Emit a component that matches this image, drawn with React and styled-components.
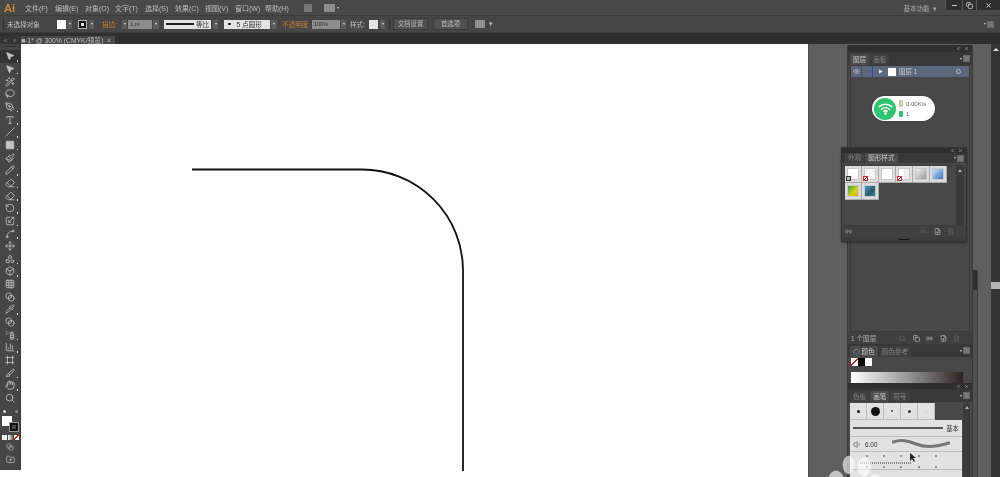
import styled, { createGlobalStyle } from 'styled-components';
import {
	MousePointer2, Wand2, Lasso, PenTool, Type, Slash, Square, Paintbrush, Pencil, Eraser,
	RotateCcw, Scaling, Spline, Move, Shapes, Box, Grid3x3, Pipette, Blend, SprayCan,
	BarChart3, Frame, Slice, Hand, Search, ChevronsLeft, X, Minus, Copy, Trash2, FilePlus,
	Eye, Play, Volume1, FolderPlus, Link2,
} from 'lucide-react';

const GlobalStyle = createGlobalStyle`
	html, body {
		margin: 0;
		padding: 0;
		background: #fff;
		overflow: hidden;
	}
	* {
		box-sizing: border-box;
	}
`;

const FONT = `"Liberation Sans", "Noto Sans CJK SC", sans-serif`;

const Window = styled.div`
	position: relative;
	display: flex;
	flex-direction: column;
	width: 1000px;
	height: 477px;
	overflow: hidden;
	font-family: ${FONT};
	color: #c4c4c4;
	filter: blur(0.35px);
`;

const MenuBar = styled.div`
	display: flex;
	align-items: center;
	height: 15px;
	background: #494949;
`;

const Logo = styled.div`
	width: 25px;
	padding-left: 4px;
	font-size: 11px;
	font-weight: 700;
	color: #d08a2e;
`;

const MenuItem = styled.div`
	width: 30px;
	font-size: 7px;
	white-space: nowrap;
	color: #bdbdbd;
`;

const MenuIcon = styled.div`
	flex: none;
	width: ${(p) => p.$w}px;
	height: 8px;
	margin-left: ${(p) => p.$ml}px;
	background: ${(p) => p.$bg || '#777'};
`;

const MenuArrow = styled.div`
	margin-left: 2px;
	border-left: 1.5px solid transparent;
	border-right: 1.5px solid transparent;
	border-top: 2px solid #ddd;
`;

const Workspace = styled.div`
	margin-left: auto;
	margin-right: 8px;
	font-size: 6.5px;
	color: #aaa;
`;

const WindowButtons = styled.div`
	display: flex;
	align-self: flex-start;
	height: 10px;
	background: #2f2f2f;
	border-radius: 0 0 2px 2px;
`;

const WindowButton = styled.div`
	display: flex;
	align-items: center;
	justify-content: center;
	width: ${(p) => p.$w}px;
	border-left: 1px solid #555;
	color: #ddd;
`;

const ControlBar = styled.div`
	display: flex;
	align-items: center;
	height: 18px;
	background: #464646;
	border-top: 1px solid #3b3b3b;
	border-bottom: 1px solid #3d3d3d;
`;

const Divider = styled.div`
	width: 1px;
	height: 11px;
	margin-left: ${(p) => p.$ml}px;
	background: #2f2f2f;
`;

const Label = styled.div`
	flex: none;
	width: ${(p) => p.$w}px;
	margin-left: ${(p) => p.$ml}px;
	font-size: 6.6px;
	white-space: nowrap;
	color: ${(p) => (p.$orange ? '#c97f2c' : '#c0c0c0')};
`;

const Swatch = styled.div`
	flex: none;
	width: ${(p) => p.$w || 9}px;
	height: 9px;
	margin-left: ${(p) => p.$ml}px;
	background: ${(p) => p.$bg || '#fff'};
`;

const StrokeSwatch = styled(Swatch)`
	display: flex;
	align-items: center;
	justify-content: center;
	background: #111;
	border: 1px solid #bbb;

	&::after {
		content: '';
		width: 3px;
		height: 3px;
		background: #ddd;
	}
`;

const ArrowBox = styled.div`
	flex: none;
	display: flex;
	align-items: center;
	justify-content: center;
	width: ${(p) => p.$w || 6}px;
	height: 9px;
	margin-left: ${(p) => p.$ml}px;
	background: #5c5c5c;

	&::after {
		content: '';
		border-left: 1.5px solid transparent;
		border-right: 1.5px solid transparent;
		border-top: 2px solid #ddd;
	}
`;

const Input = styled.div`
	flex: none;
	width: ${(p) => p.$w}px;
	height: 9px;
	margin-left: ${(p) => p.$ml}px;
	padding-left: 2px;
	background: #8d8d8d;
	color: #2c2c2c;
	font-size: 5.5px;
	line-height: 9px;
	white-space: nowrap;
`;

const LightBox = styled(Input)`
	display: flex;
	align-items: center;
	gap: 2px;
	background: #e3e3e3;
	color: #333;
	font-size: 6.6px;
`;

const StrokeLine = styled.div`
	width: 28px;
	height: 1.5px;
	background: #222;
`;

const BrushDot = styled.div`
	width: 2.5px;
	height: 2.5px;
	margin: 0 4px 0 2px;
	border-radius: 50%;
	background: #111;
`;

const BarButton = styled.div`
	flex: none;
	width: 35px;
	height: 12px;
	margin-left: ${(p) => p.$ml}px;
	border: 1px solid #3a3a3a;
	background: #515151;
	color: #b9b9b9;
	font-size: 6.4px;
	line-height: 10px;
	text-align: center;
`;

const PanelMenuIcon = styled.div`
	display: flex;
	align-items: center;
	gap: 1px;
	margin-left: ${(p) => p.$ml}px;

	&::before {
		content: '';
		border-top: 1.5px solid transparent;
		border-bottom: 1.5px solid transparent;
		border-left: 2px solid #ccc;
		transform: rotate(90deg);
	}
	&::after {
		content: '';
		width: 5px;
		height: 5px;
		background: #777;
		border: 1px solid #666;
	}
`;

const TabStrip = styled.div`
	display: flex;
	align-items: flex-end;
	height: 11px;
	padding-left: 21px;
	background: #2f2f2f;
`;

const DocTab = styled.div`
	display: flex;
	align-items: center;
	justify-content: space-between;
	width: 94px;
	height: 8px;
	padding-right: 4px;
	background: #484848;
	color: #bdbdbd;
	font-size: 6.8px;
	white-space: nowrap;
`;

const Body = styled.div`
	flex: 1;
	display: flex;
	min-height: 0;
	background: #fff;
`;

const Canvas = styled.div`
	flex: none;
	width: 808px;
	height: 100%;
	background: #fff;
`;

const RightPane = styled.div`
	flex: none;
	display: flex;
	width: 183px;
	padding: 1px 0 0 40px;
	background: #5f5f5f;
	border-left: 1px solid #4e4e4e;
`;

const DockColumn = styled.div`
	display: flex;
	flex-direction: column;
	flex: none;
	width: 126px;
	margin-left: -2px;
`;

const SideDock = styled.div`
	width: 5px;
	height: 207px;
	margin-top: 225px;
	background: linear-gradient(#2f2f2f 0 20px, #505050 20px);
	border-right: 1px solid #3c3c3c;
`;

const Rail = styled.div`
	flex: none;
	display: flex;
	flex-direction: column;
	align-items: center;
	width: 9px;
	background: #353535;
`;

const RailArrow = styled.div`
	margin-top: 4px;
	border-left: 3px solid transparent;
	border-right: 3px solid transparent;
	border-bottom: 3px solid #ddd;
`;

const RailThumb = styled.div`
	width: 9px;
	height: 7px;
	margin-top: 231px;
	background: #b5b5b5;
`;

const Panel = styled.div`
	display: flex;
	flex-direction: column;
	flex: ${(p) => (p.$h ? 'none' : '1')};
	height: ${(p) => (p.$h ? `${p.$h}px` : 'auto')};
	min-height: 0;
	background: #484848;
	border-left: 1px solid #3a3a3a;
	border-right: 1px solid #3a3a3a;
`;

const PanelHead = styled.div`
	flex: none;
	display: flex;
	align-items: center;
	justify-content: flex-end;
	gap: 3px;
	height: ${(p) => p.$h || 7}px;
	padding-right: 3px;
	background: #2f2f2f;
	color: #ccc;
`;

const TabRow = styled.div`
	flex: none;
	display: flex;
	align-items: flex-end;
	height: ${(p) => p.$h || 13}px;
	padding-left: ${(p) => p.$pl || 2}px;
	background: #383838;
`;

const PanelTab = styled.div`
	height: ${(p) => p.$h || 11}px;
	padding: 0 3px;
	margin-right: 1px;
	background: ${(p) => (p.$active ? '#4a4a4a' : '#3f3f3f')};
	color: ${(p) => (p.$active ? '#c8c8c8' : '#808080')};
	font-size: 6.6px;
	line-height: ${(p) => p.$h || 11}px;
	white-space: nowrap;
`;

const TabMenu = styled(PanelMenuIcon)`
	margin-left: auto;
	align-self: center;
	padding-right: 2px;
`;

const LayerBox = styled.div`
	flex: 1;
	margin: 0 2px;
	border: 1px solid #3a3a3a;
`;

const LayerRow = styled.div`
	display: flex;
	align-items: center;
	height: 11px;
	background: #5b677c;
	color: #ccc;
	font-size: 6.4px;
	white-space: nowrap;
`;

const LayerCell = styled.div`
	flex: none;
	display: flex;
	align-items: center;
	justify-content: center;
	width: ${(p) => p.$w}px;
	height: 100%;
	border-right: 1px solid #48505f;
`;

const ColorBar = styled.div`
	width: 1px;
	height: 100%;
	margin-right: 1px;
	background: #3c6ae0;
`;

const LayerThumb = styled.div`
	width: 8px;
	height: 8px;
	margin: 0 3px 0 2px;
	background: #fff;
`;

const LayerName = styled.div`
	flex: 1;
`;

const TargetRing = styled.div`
	width: 5px;
	height: 5px;
	margin-right: 8px;
	border: 1px solid #bbb;
	border-radius: 50%;
`;

const PanelFoot = styled.div`
	flex: none;
	display: flex;
	align-items: center;
	gap: 6.5px;
	height: ${(p) => p.$h || 12}px;
	padding: 0 12px 0 3px;
	background: #404040;
	color: #b0b0b0;
	font-size: 6.6px;
	white-space: nowrap;
`;

const FootText = styled.div`
	margin-right: auto;
`;

const FootIcon = styled.div`
	display: flex;
	color: ${(p) => (p.$dim ? '#666' : '#c8c8c8')};
`;

const ColorChips = styled.div`
	display: flex;
	margin: 1px 0 0 3px;
`;

const Chip = styled.div`
	width: 7px;
	height: 8px;
	background: ${(p) => p.$bg};
`;

const Gradient = styled.div`
	height: 11px;
	margin: 6px 9px 0 3px;
	background: linear-gradient(90deg, #fff, #8e8e8e 55%, #2d2221);
`;

const BrushBody = styled.div`
	flex: 1;
	display: flex;
	min-height: 0;
	padding: 1px 2px 0 2px;
`;

const BrushList = styled.div`
	flex: none;
	width: 112px;
	background: #e2e2e2;
`;

const BrushTipRow = styled.div`
	display: flex;
	background: #484848;
`;

const BrushTip = styled.div`
	display: flex;
	align-items: center;
	justify-content: center;
	width: 17px;
	height: 17px;
	border-right: 1px solid #bcbcbc;
	border-bottom: 1px solid #bcbcbc;
	background: #e2e2e2;
`;

const Tip = styled.div`
	width: ${(p) => p.$s}px;
	height: ${(p) => p.$s}px;
	border-radius: 50%;
	background: ${(p) => p.$c || '#111'};
`;

const BrushRow = styled.div`
	display: flex;
	align-items: center;
	height: ${(p) => p.$h}px;
	padding: 0 3px;
	gap: 3px;
	border-bottom: 1px solid #bcbcbc;
	color: #333;
	font-size: 6.4px;
	white-space: nowrap;
`;

const BasicLine = styled.div`
	flex: 1;
	height: 2px;
	background: #555;
`;

const WaveStroke = styled.svg`
	margin-left: 12px;
`;

const ScrollTrack = styled.div`
	flex: none;
	display: flex;
	justify-content: center;
	width: 7px;
	margin-left: 1px;
	padding-top: 3px;
	background: #3a3a3a;
`;

const ScrollUp = styled.div`
	width: 0;
	height: 0;
	border-left: 2px solid transparent;
	border-right: 2px solid transparent;
	border-bottom: 3px solid #aaa;
`;

const Toolbar = styled.div`
	position: absolute;
	top: 36px;
	left: 0;
	display: flex;
	flex-direction: column;
	width: 21px;
	height: 434px;
	background: #464646;
	border-right: 1px solid #393939;
`;

const ToolbarHead = styled.div`
	flex: none;
	display: flex;
	align-items: center;
	justify-content: space-between;
	height: 8px;
	padding: 0 3px;
	background: #333;
	color: #bbb;
`;

const ToolbarGrip = styled.div`
	flex: none;
	height: 6px;
	padding-top: 2px;

	&::after {
		content: '';
		display: block;
		height: 1px;
		margin: 0 4px;
		background: #2c2c2c;
	}
`;

const Tool = styled.div`
	position: relative;
	flex: none;
	display: flex;
	align-items: center;
	justify-content: center;
	height: 12.66px;
	color: #c2c2c2;
	background: ${(p) => (p.$active ? '#333' : 'transparent')};

	${(p) =>
		p.$more &&
		`&::after {
			content: '';
			position: absolute;
			right: 2px;
			bottom: 1px;
			width: 1.5px;
			height: 1.5px;
			background: #ddd;
		}`}
`;

const ColorTools = styled.div`
	flex: 1;
	display: flex;
	flex-direction: column;
	align-items: center;
	padding-top: 3px;
`;

const MiniRow = styled.div`
	display: flex;
	align-items: center;
	justify-content: space-between;
	width: 15px;
	height: ${(p) => p.$h}px;
	color: #bbb;
`;

const FillStack = styled.div`
	position: relative;
	width: 17px;
	height: 16px;
	margin-top: 1px;
`;

const FillSquare = styled.div`
	position: absolute;
	top: 0;
	left: 0;
	width: 10px;
	height: 10px;
	background: #fff;
`;

const StrokeSquare = styled.div`
	position: absolute;
	right: 0;
	bottom: 0;
	width: 10px;
	height: 10px;
	border: 3px solid #111;
	outline: 1px solid #999;
	outline-offset: -1px;
`;

const FillModes = styled.div`
	display: flex;
	gap: 1px;
	margin-top: 3px;
`;

const FillMode = styled.div`
	width: ${(p) => p.$w}px;
	height: 5px;
	background: ${(p) => p.$bg};
`;

const ToolGlyph = styled.div`
	display: flex;
	margin-top: ${(p) => p.$mt}px;
	color: #b5b5b5;
`;

const SpeedPill = styled.div`
	position: absolute;
	top: 96px;
	left: 872px;
	display: flex;
	align-items: center;
	width: 63px;
	height: 25px;
	padding-left: 2px;
	border-radius: 13px;
	background: #fff;
	box-shadow: 0 0 2px rgba(0, 0, 0, 0.3);
`;

const WifiBadge = styled.div`
	flex: none;
	display: flex;
	align-items: center;
	justify-content: center;
	width: 22px;
	height: 22px;
	border-radius: 50%;
	background: #2fc46f;
`;

const SpeedInfo = styled.div`
	display: flex;
	flex-direction: column;
	gap: 3px;
	margin-left: 3px;
	color: #666;
	font-size: 6px;
`;

const SpeedLine = styled.div`
	display: flex;
	align-items: center;
	gap: 3px;
	height: 7px;
`;

const FloatPanel = styled.div`
	position: absolute;
	top: 147px;
	left: 841px;
	display: flex;
	flex-direction: column;
	width: 126px;
	height: 95px;
	background: #484848;
	border: 1px solid #333;
	box-shadow: 0 1px 2px rgba(0, 0, 0, 0.4);
`;

const StyleArea = styled.div`
	flex: 1;
	display: flex;
	margin: 2px 2px 0;
	border: 1px solid #3c3c3c;
	min-height: 0;
`;

const StyleGrid = styled.div`
	flex: 1;
	display: grid;
	grid-template-columns: repeat(6, 17px);
	grid-auto-rows: 17px;
	align-content: start;
`;

const StyleCell = styled.div`
	position: relative;
	display: flex;
	align-items: center;
	justify-content: center;
	background: #dcdcdc;
	border-right: 1px solid #aaa;
	border-bottom: 1px solid #aaa;
`;

const StyleFace = styled.div`
	width: 12px;
	height: 12px;
	background: ${(p) => p.$bg};
	border: 1px solid #c8c8c8;
`;

const StyleBadge = styled.div`
	position: absolute;
	left: 1px;
	bottom: 1px;
	width: 5px;
	height: 5px;
	border: 1px solid ${(p) => (p.$kind === 'red' ? '#d8262c' : '#333')};
	background: ${(p) =>
		p.$kind === 'red'
			? 'linear-gradient(135deg, #fff 35%, #d8262c 35% 65%, #fff 65%)'
			: '#bbb'};
`;

const StyleScroll = styled(ScrollTrack)`
	margin: 0;
`;

const Gripper = styled.div`
	flex: none;
	display: flex;
	align-items: center;
	justify-content: center;
	height: 4px;
	background: #3c3c3c;

	&::after {
		content: '';
		width: 10px;
		height: 1px;
		background: #111;
	}
`;

const Overlay = styled.svg`
	position: absolute;
	top: 0;
	left: 0;
	pointer-events: none;
`;

const menus = ['文件(F)', '编辑(E)', '对象(O)', '文字(T)', '选择(S)', '效果(C)', '视图(V)', '窗口(W)', '帮助(H)'];

const tools = [
	[MousePointer2, true, true],
	[MousePointer2, true],
	[Wand2],
	[Lasso],
	[PenTool, true],
	[Type, true],
	[Slash, true],
	[Square, true],
	[Paintbrush],
	[Pencil, true],
	[Eraser, true],
	[Eraser, true],
	[RotateCcw, true],
	[Scaling, true],
	[Spline, true],
	[Move],
	[Shapes, true],
	[Box, true],
	[Grid3x3],
	[Blend],
	[Pipette, true],
	[Blend],
	[SprayCan, true],
	[BarChart3, true],
	[Frame],
	[Slice, true],
	[Hand, true],
	[Search],
];

const styleFaces = [
	{ bg: '#fff', badge: 'dark' },
	{ bg: '#f4f4f4', badge: 'red' },
	{ bg: '#fff' },
	{ bg: 'linear-gradient(90deg, #fff 50%, #eee 50%)', badge: 'red' },
	{ bg: 'linear-gradient(135deg, #eee, #999)' },
	{ bg: 'linear-gradient(135deg, #cfe3f8, #2f78c8)' },
	{ bg: 'linear-gradient(135deg, #2f9e3a, #d5d51c 60%, #f0a010)' },
	{ bg: 'linear-gradient(135deg, #3ba0cc, #2a5a6a 60%, #3a8aa8)' },
];

const PanelWindowMarks = () => (
	<>
		<ChevronsLeft size={5} strokeWidth={2} />
		<X size={5} strokeWidth={2} />
	</>
);

const WifiIcon = () => (
	<svg width="15" height="13" viewBox="0 0 24 20" fill="none" stroke="#fff" strokeWidth="2.6" strokeLinecap="round">
		<path d="M2 7a15 15 0 0 1 20 0" />
		<path d="M6 11a9 9 0 0 1 12 0" />
		<path d="M9.5 14.5a4 4 0 0 1 5 0" />
		<circle cx="12" cy="18" r="0.8" fill="#fff" />
	</svg>
);

const App = () => {
	return (
		<>
			<GlobalStyle />
			<Window>
				<MenuBar>
					<Logo>Ai</Logo>
					{menus.map((m) => (
						<MenuItem key={m}>{m}</MenuItem>
					))}
					<MenuIcon $w={8} $ml={9} />
					<MenuIcon $w={11} $ml={12} $bg="#8a8a8a" />
					<MenuArrow />
					<Workspace>基本功能 &nbsp;▾</Workspace>
					<WindowButtons>
						<WindowButton $w={17}><Minus size={7} strokeWidth={3} /></WindowButton>
						<WindowButton $w={14}><Copy size={7} strokeWidth={2.5} /></WindowButton>
						<WindowButton $w={24}><X size={7} strokeWidth={3} /></WindowButton>
					</WindowButtons>
				</MenuBar>

				<ControlBar>
					<Divider $ml={3} />
					<Label $ml={3} $w={31}>未选择对象</Label>
					<Swatch $ml={19} />
					<ArrowBox $ml={1} $w={5} />
					<StrokeSwatch $ml={6} />
					<ArrowBox $ml={2} $w={5} />
					<Label $ml={8} $w={20} $orange>描边:</Label>
					<ArrowBox $w={5} />
					<Input $ml={1} $w={24}>1 pt</Input>
					<ArrowBox $ml={1} />
					<LightBox $ml={5} $w={47}><StrokeLine />等比</LightBox>
					<ArrowBox $ml={2} $w={5} />
					<LightBox $ml={6} $w={46}><BrushDot />5 点圆形</LightBox>
					<ArrowBox $ml={1} />
					<Label $ml={5} $w={30} $orange>不透明度:</Label>
					<Input $w={28}>100%</Input>
					<ArrowBox $ml={1} $w={5} />
					<Label $ml={4} $w={19}>样式:</Label>
					<Swatch $bg="#e4e4e4" />
					<ArrowBox $ml={2} $w={5} />
					<Divider $ml={4} />
					<BarButton $ml={3}>文档设置</BarButton>
					<BarButton $ml={5}>首选项</BarButton>
					<MenuIcon $w={10} $ml={7} $bg="#8f8f8f" />
					<Label $ml={4} $w={5}>▾</Label>
					<PanelMenuIcon $ml={490} />
				</ControlBar>

				<TabStrip>
					<DocTab>
						<span>■-1* @ 300% (CMYK/预览)</span>
						<span>×</span>
					</DocTab>
				</TabStrip>

				<Body>
					<Canvas>
						<svg width="808" height="433" viewBox="0 44 808 433">
							<path d="M192 169.5H362A101 101 0 0 1 463 270.5V471" fill="none" stroke="#111" strokeWidth="1.8" />
						</svg>
					</Canvas>

					<RightPane>
						<DockColumn>
							<Panel $h={299}>
								<PanelHead><PanelWindowMarks /></PanelHead>
								<TabRow>
									<PanelTab $active>图层</PanelTab>
									<PanelTab>画板</PanelTab>
									<TabMenu />
								</TabRow>
								<LayerBox>
									<LayerRow>
										<LayerCell $w={11}><Eye size={7} /></LayerCell>
										<LayerCell $w={11} />
										<ColorBar />
										<Play size={5} fill="#ddd" style={{ margin: '0 3px' }} />
										<LayerThumb />
										<LayerName>图层 1</LayerName>
										<TargetRing />
									</LayerRow>
								</LayerBox>
								<PanelFoot>
									<FootText>1 个图层</FootText>
									<FootIcon $dim><Search size={7} /></FootIcon>
									<FootIcon><Copy size={7} /></FootIcon>
									<FootIcon><Link2 size={7} /></FootIcon>
									<FootIcon><FilePlus size={7} /></FootIcon>
									<FootIcon $dim><Trash2 size={7} /></FootIcon>
								</PanelFoot>
							</Panel>

							<Panel $h={39}>
								<TabRow>
									<PanelTab $active>◇ 颜色</PanelTab>
									<PanelTab>颜色参考</PanelTab>
									<TabMenu />
								</TabRow>
								<ColorChips>
									<Chip $bg="linear-gradient(135deg, #fff 42%, #e01c1c 42% 58%, #fff 58%)" />
									<Chip $bg="#000" />
									<Chip $bg="#fff" />
								</ColorChips>
								<Gradient />
							</Panel>

							<Panel>
								<PanelHead $h={6}><PanelWindowMarks /></PanelHead>
								<TabRow>
									<PanelTab>色板</PanelTab>
									<PanelTab $active>画笔</PanelTab>
									<PanelTab>符号</PanelTab>
									<TabMenu />
								</TabRow>
								<BrushBody>
									<BrushList>
										<BrushTipRow>
											<BrushTip><Tip $s={3} /></BrushTip>
											<BrushTip><Tip $s={9} /></BrushTip>
											<BrushTip><Tip $s={1.5} $c="#555" /></BrushTip>
											<BrushTip><Tip $s={3} $c="#333" /></BrushTip>
											<BrushTip><Tip $s={1} $c="#aaa" /></BrushTip>
										</BrushTipRow>
										<BrushRow $h={17}><BasicLine />基本</BrushRow>
										<BrushRow $h={15}>
											<Volume1 size={9} color="#666" />
											6.00
											<WaveStroke width="58" height="10" viewBox="0 0 58 10">
												<path d="M1 3C10 0 16 2 24 5S40 9 57 4" fill="none" stroke="#777" strokeWidth="3" strokeLinecap="round" />
											</WaveStroke>
										</BrushRow>
										<BrushRow $h={18}>
											<svg width="100" height="14" viewBox="0 0 100 14">
												<path d="M7 9H58" fill="none" stroke="#222" strokeDasharray="1 1" />
												<path d="M14 1v2M31 1v2M48 1v2M66 1v2M83 1v2M14 12v2M31 12v2M48 12v2M66 12v2M83 12v2" stroke="#444" />
											</svg>
										</BrushRow>
									</BrushList>
									<ScrollTrack><ScrollUp /></ScrollTrack>
								</BrushBody>
							</Panel>
						</DockColumn>
						<SideDock />
					</RightPane>

					<Rail>
						<RailArrow />
						<RailThumb />
					</Rail>
				</Body>

				<Toolbar>
					<ToolbarHead>
						<ChevronsLeft size={5} />
						<X size={5} />
					</ToolbarHead>
					<ToolbarGrip />
					{tools.map(([Icon, more, active], i) => (
						<Tool key={i} $more={more} $active={active}>
							<Icon size={10} strokeWidth={2} fill={i < 2 || i === 7 ? 'currentColor' : 'none'} />
						</Tool>
					))}
					<ColorTools>
						<MiniRow $h={8}>
							<Tip $s={3} $c="#ddd" />
							<Tip $s={3} $c="#888" />
						</MiniRow>
						<FillStack>
							<FillSquare />
							<StrokeSquare />
						</FillStack>
						<FillModes>
							<FillMode $w={5} $bg="#eee" />
							<FillMode $w={5} $bg="linear-gradient(90deg, #fff, #666)" />
							<FillMode $w={5} $bg="linear-gradient(135deg, #fff 40%, #e01c1c 40% 60%, #fff 60%)" />
						</FillModes>
						<ToolGlyph $mt={3}><Blend size={8} /></ToolGlyph>
						<ToolGlyph $mt={4}><FolderPlus size={9} /></ToolGlyph>
					</ColorTools>
				</Toolbar>

				<SpeedPill>
					<WifiBadge><WifiIcon /></WifiBadge>
					<SpeedInfo>
						<SpeedLine>
							<svg width="4" height="7" viewBox="0 0 4 7">
								<path d="M1 0v7" stroke="#3cb86a" />
								<path d="M3 0v7" stroke="#f08a30" />
							</svg>
							0.00K/s
						</SpeedLine>
						<SpeedLine>
							<svg width="4" height="6" viewBox="0 0 4 6">
								<rect width="4" height="6" rx="1" fill="#2fc46f" />
							</svg>
							1
						</SpeedLine>
					</SpeedInfo>
				</SpeedPill>

				<FloatPanel>
					<PanelHead $h={5}><PanelWindowMarks /></PanelHead>
					<TabRow $pl={3} $h={10}>
						<PanelTab $h={10}>外观</PanelTab>
						<PanelTab $h={10} $active>图形样式</PanelTab>
						<TabMenu />
					</TabRow>
					<StyleArea>
						<StyleGrid>
							{styleFaces.map((face, i) => (
								<StyleCell key={i}>
									<StyleFace $bg={face.bg} />
									{face.badge && <StyleBadge $kind={face.badge} />}
								</StyleCell>
							))}
						</StyleGrid>
						<StyleScroll><ScrollUp /></StyleScroll>
					</StyleArea>
					<PanelFoot $h={11}>
						<FootText>
							<Link2 size={7} />
						</FootText>
						<FootIcon $dim><Link2 size={7} /></FootIcon>
						<FootIcon><FilePlus size={7} /></FootIcon>
						<FootIcon $dim><Trash2 size={7} /></FootIcon>
					</PanelFoot>
					<Gripper />
				</FloatPanel>

				<Overlay width="1000" height="477" viewBox="0 0 1000 477">
					<g fill="#fff" fillOpacity="0.62" stroke="#ddd" strokeWidth="0.5">
						<ellipse cx="849" cy="465" rx="6" ry="9" />
						<ellipse cx="864" cy="467" rx="7" ry="10" />
						<ellipse cx="836" cy="479" rx="7" ry="8" />
						<ellipse cx="875" cy="481" rx="7" ry="7" />
					</g>
					<path d="M910 453l0 8 2-2 2 3 1-1-2-3 3 0z" fill="#222" />
				</Overlay>
			</Window>
		</>
	);
};

export default App;
